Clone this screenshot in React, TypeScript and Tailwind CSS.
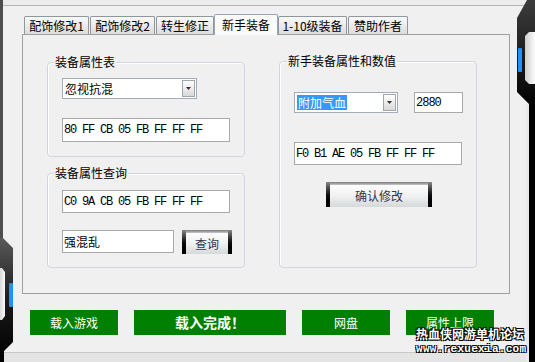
import React from "react";

const cjk = "font-['Noto_Sans_CJK_SC','Noto_Sans',sans-serif]";
const mono = "font-['Liberation_Mono',monospace]";

const tabs = [
  { label: "配饰修改1", w: "w-[65px] mr-px" },
  { label: "配饰修改2", w: "w-[65px] mr-px" },
  { label: "转生修正", w: "w-[58px]" },
  { label: "新手装备", w: "w-[64px]", active: true },
  { label: "1-10级装备", w: "w-[69px] mr-px" },
  { label: "赞助作者", w: "w-[60px]" },
];

const Combo = ({ text, w, selected }: { text: string; w: string; selected?: boolean }) => (
  <div className={`flex h-[21px] ${w} border border-[#a5acb5] bg-white p-px`}>
    <div className="flex flex-1 items-center pl-px">
      <span className={selected ? "bg-[#3399ff] px-px leading-[15px] text-white" : "leading-[15px]"}>{text}</span>
    </div>
    <div className="flex w-[13px] items-end justify-center border border-[#a0a6ae] bg-gradient-to-b from-white to-[#d9d9d9] pb-[6px]">
      <svg width="5" height="3" viewBox="0 0 5 3">
        <path d="M0 0h5L2.5 3z" fill="#333" />
      </svg>
    </div>
  </div>
);

const Field = ({ text, w, h, hex }: { text: string; w: string; h: string; hex?: boolean }) => (
  <div className={`flex ${w} ${h} items-center border border-[#a9a9a9] bg-white pl-px`}>
    <span className={hex ? `${mono} text-[12px] tracking-[-1.2px] whitespace-pre` : ""}>{text}</span>
  </div>
);

const SkinButton = ({ label, w, h }: { label: string; w: string; h: string }) => (
  <div className={`flex ${w} ${h} bg-black`}>
    <div className="w-[4px] bg-gradient-to-b from-[#8a8a8a] via-[#111] to-black" />
    <div className="flex flex-1 flex-col">
      <div className="h-[3px] bg-gradient-to-b from-[#7a7a7a] to-[#c8c8c8]" />
      <div className="flex flex-1 items-center justify-center bg-gradient-to-b from-[#fdfdfd] via-[#f1f1f1] to-[#d5d9d9] text-[12px] text-[#333355]">
        {label}
      </div>
    </div>
    <div className="w-[4px] bg-gradient-to-b from-[#8a8a8a] via-[#111] to-black" />
  </div>
);

const Group = ({ title, className, titleLeft, children }: { title: string; className: string; titleLeft: string; children: React.ReactNode }) => (
  <div className={`relative rounded-[4px] border border-[#d2d6dc] shadow-[inset_1px_1px_0_#fff] ${className}`}>
    <span className={`absolute -top-[9px] ${titleLeft} bg-[#f0f0f0] px-px leading-[16px]`}>{title}</span>
    {children}
  </div>
);

export default function App() {
  return (
    <div className={`relative flex h-[362px] w-[535px] flex-col overflow-hidden bg-[#f0f0f0] text-[12px] text-black ${cjk}`}>
      <div className="h-[6px] shrink-0 border-b border-[#b4b4b4] bg-[#ececec]" />

      <div className="pl-[22px] pt-[8px]">
        {/* tabs */}
        <div className="flex h-[20px] items-end pl-[2px]">
          {tabs.map((t) =>
            t.active ? (
              <div key={t.label} className={`relative z-10 -mb-px flex h-[21px] ${t.w} items-center justify-center rounded-t-[2px] border border-b-0 border-[#96a6ba] bg-[#fbfbfb]`}>
                {t.label}
              </div>
            ) : (
              <div key={t.label} className={`flex h-[18px] ${t.w} items-center justify-center rounded-t-[2px] border border-b-0 border-[#8f969c] bg-gradient-to-b from-[#fafafa] to-[#dcdcdc]`}>
                {t.label}
              </div>
            )
          )}
        </div>

        {/* panel */}
        <div className="flex h-[260px] w-[488px] gap-[34px] border border-[#a0a0a0] pl-[24px] pt-[27px]">
          <div className="flex w-[198px] flex-col gap-[16px]">
            <Group title="装备属性表" titleLeft="left-[6px]" className="h-[95px] pl-[14px] pt-[15px]">
              <Combo text="忽视抗混" w="w-[135px]" />
              <div className="mt-[19px]">
                <Field text="80 FF CB 05 FB FF FF FF" w="w-[168px]" h="h-[24px]" hex />
              </div>
            </Group>
            <Group title="装备属性查询" titleLeft="left-[6px]" className="h-[95px] pl-[14px] pt-[16px]">
              <Field text="C0 9A CB 05 FB FF FF FF" w="w-[168px]" h="h-[23px]" hex />
              <div className="mt-[17px] flex items-start gap-[8px]">
                <Field text="强混乱" w="w-[112px]" h="h-[23px]" />
                <SkinButton label="查询" w="w-[50px]" h="h-[24px]" />
              </div>
            </Group>
          </div>

          <Group title="新手装备属性和数值" titleLeft="left-[7px]" className="-mt-px h-[207px] w-[198px] pl-[14px] pt-[30px]">
            <div className="flex gap-[16px]">
              <Combo text="附加气血" w="w-[104px]" selected />
              <div className="flex h-[21px] w-[49px] items-center border border-[#a9a9a9] bg-white pl-px">
                <span className={`${mono} text-[12px] tracking-[-1px]`}>2880</span>
              </div>
            </div>
            <div className="mt-[29px]">
              <Field text="F0 B1 AE 05 FB FF FF FF" w="w-[168px]" h="h-[23px]" hex />
            </div>
            <div className="mt-[17px] pl-[32px]">
              <SkinButton label="确认修改" w="w-[106px]" h="h-[25px]" />
            </div>
          </Group>
        </div>

        {/* bottom buttons */}
        <div className="mt-[16px] flex gap-[16px] pl-[8px] text-white">
          <div className="flex h-[25px] w-[88px] items-center justify-center bg-[#008000]">载入游戏</div>
          <div className="flex h-[25px] w-[152px] items-center justify-center bg-[#008000] text-[14px] font-bold">载入完成！</div>
          <div className="flex h-[25px] w-[88px] items-center justify-center bg-[#008000]">网盘</div>
          <div className="flex h-[25px] w-[88px] items-center justify-center bg-[#008000]">属性上限</div>
        </div>
      </div>

      <div className="mt-auto h-[10px] shrink-0 border-t border-[#c8c8c8] bg-[#e4e4e4]" />

      {/* frame decoration, left */}
      <svg className="absolute left-0 top-0" width="14" height="362" viewBox="0 0 14 362">
        <defs>
          <linearGradient id="lg" x1="0" y1="0" x2="0" y2="1">
            <stop offset="0" stopColor="#5a5a5a" />
            <stop offset="0.5" stopColor="#1a1a1a" />
            <stop offset="1" stopColor="#000" />
          </linearGradient>
          <linearGradient id="lw" x1="0" y1="0" x2="1" y2="0">
            <stop offset="0" stopColor="#d8d8d8" />
            <stop offset="1" stopColor="#fafafa" />
          </linearGradient>
        </defs>
        <rect x="0" y="0" width="3" height="362" fill="#4e4e4e" />
        <polygon points="0,238 3,238 13,248 13,342 4,351 4,362 0,362" fill="url(#lg)" />
        <polygon points="0,268 2,268 5,272 5,316 2,320 0,320" fill="url(#lw)" />
        <rect x="9" y="283" width="4" height="24" rx="1" fill="#1e90ff" />
      </svg>

      {/* frame decoration, right */}
      <svg className="absolute right-0 top-0" width="19" height="362" viewBox="0 0 19 362">
        <defs>
          <linearGradient id="rg" x1="0" y1="0" x2="0" y2="1">
            <stop offset="0" stopColor="#3c3c3c" />
            <stop offset="0.3" stopColor="#000" />
            <stop offset="1" stopColor="#000" />
          </linearGradient>
          <linearGradient id="rw" x1="0" y1="0" x2="1" y2="0">
            <stop offset="0" stopColor="#cfcfcf" />
            <stop offset="1" stopColor="#fbfbfb" />
          </linearGradient>
        </defs>
        <rect x="10" y="104" width="3" height="258" fill="#e9e9e9" />
        <polygon points="11,0 19,0 19,362 13,362 13,104 1,92 1,18" fill="url(#rg)" />
        <polygon points="13,32 19,32 19,84 13,84 9,80 9,36" fill="url(#rw)" />
        <rect x="2" y="48" width="4" height="24" rx="1" fill="#1e90ff" />
      </svg>

      {/* watermark */}
      <div className="absolute left-[416px] top-[328px] flex flex-col leading-none text-white [text-shadow:1px_1px_0_#000,-1px_-1px_0_#000,1px_-1px_0_#000,-1px_1px_0_#000]">
        <span className="text-[12px] font-bold">热血侠网游单机论坛</span>
        <span className={`mt-[4px] ${mono} text-[11px] font-bold tracking-[0.3px]`}>www.rexuexia.com</span>
      </div>
    </div>
  );
}
